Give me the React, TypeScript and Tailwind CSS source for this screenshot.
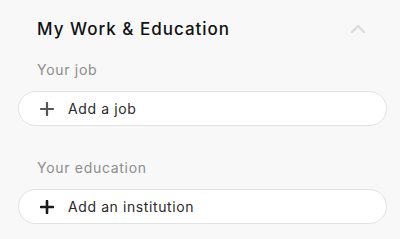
import React from "react";

function Plus({ dark }: { dark?: boolean }) {
  return (
    <svg width="14" height="14" viewBox="0 0 14 14" className="shrink-0">
      <path
        d="M7 1v12M1 7h12"
        stroke={dark ? "#1a1a1a" : "#555555"}
        strokeWidth={dark ? 2.6 : 2.2}
        strokeLinecap="round"
      />
    </svg>
  );
}

function AddButton({ label, dark }: { label: string; dark?: boolean }) {
  return (
    <div className="flex h-[35px] items-center gap-[14px] rounded-full border border-[#e2e2e2] bg-white pl-[21px]">
      <Plus dark={dark} />
      <span className="text-[14px] tracking-[0.6px] text-[#2a2a2a]">{label}</span>
    </div>
  );
}

export default function App() {
  return (
    <div
      className="h-[239px] w-[400px] bg-[#f8f8f8] pl-[18px] pr-[13px] pt-[18px]"
      style={{ fontFamily: "Inter, 'Noto Sans', sans-serif" }}
    >
      <div className="flex items-center justify-between pl-[19px] pr-[21px]">
        <h1 className="text-[17px] font-medium leading-[22px] tracking-[1px] text-[#111]">My Work &amp; Education</h1>
        <svg width="16" height="10" viewBox="0 0 16 10">
          <path d="M2 8l6-6 6 6" stroke="#dcdcdc" strokeWidth="2.4" fill="none" strokeLinecap="round" strokeLinejoin="round" />
        </svg>
      </div>
      <div className="pl-[19px] pt-[21px] text-[14px] leading-[18px] tracking-[0.7px] text-[#8c8c8c]">Your job</div>
      <div className="mt-[12px]">
        <AddButton label="Add a job" />
      </div>
      <div className="pl-[19px] pt-[33px] text-[14px] leading-[18px] tracking-[0.7px] text-[#8c8c8c]">Your education</div>
      <div className="mt-[12px]">
        <AddButton label="Add an institution" dark />
      </div>
    </div>
  );
}
